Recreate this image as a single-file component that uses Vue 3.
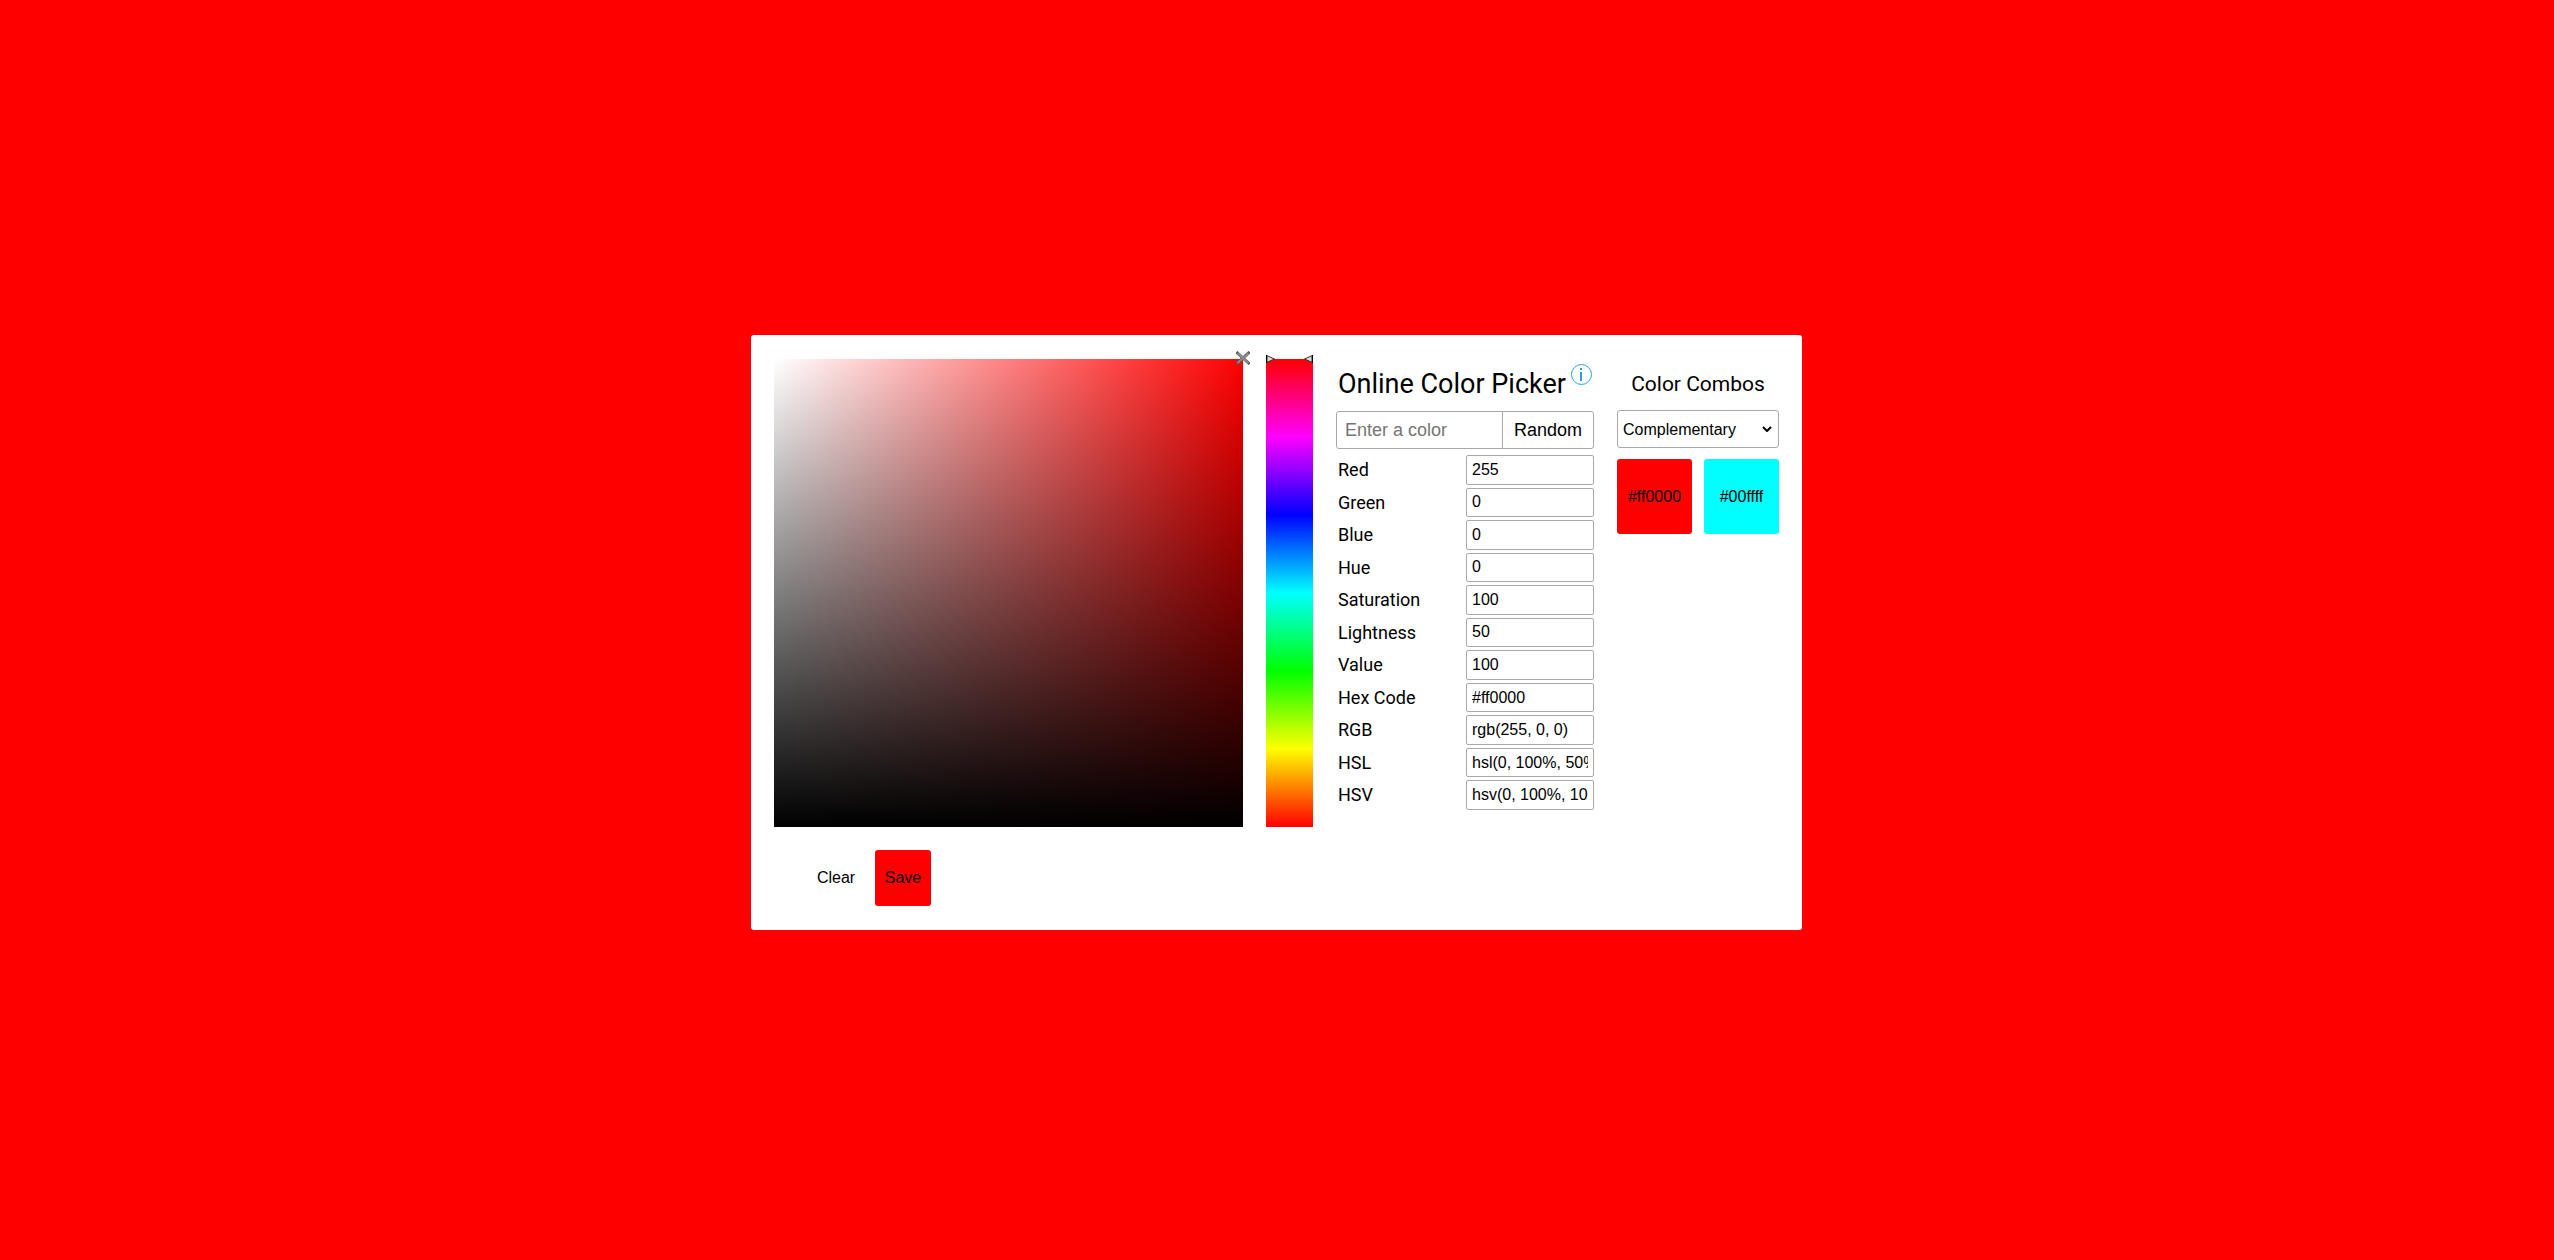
<script setup>
import { ref } from 'vue'

const fields = ref([
  { id: 'red', label: 'Red', value: '255' },
  { id: 'green', label: 'Green', value: '0' },
  { id: 'blue', label: 'Blue', value: '0' },
  { id: 'hue', label: 'Hue', value: '0' },
  { id: 'saturation', label: 'Saturation', value: '100' },
  { id: 'lightness', label: 'Lightness', value: '50' },
  { id: 'value', label: 'Value', value: '100' },
  { id: 'hex', label: 'Hex Code', value: '#ff0000' },
  { id: 'rgb', label: 'RGB', value: 'rgb(255, 0, 0)' },
  { id: 'hsl', label: 'HSL', value: 'hsl(0, 100%, 50%)' },
  { id: 'hsv', label: 'HSV', value: 'hsv(0, 100%, 100%)' },
])
const swatches = ['#ff0000', '#00ffff']
const entry = ref('')
</script>

<template>
  <main class="page">
    <section class="card">
      <div class="columns">
        <div class="shade">
          <svg class="cross" width="14" height="14" viewBox="0 0 14 14" aria-hidden="true">
            <path d="M1.500 2 12.500 12M12.500 2 1.500 12" stroke="#555" stroke-width="3" stroke-linecap="square" />
            <path d="M1.500 2 12.500 12M12.500 2 1.500 12" stroke="#8c8c8c" stroke-width="2" />
          </svg>
        </div>

        <div class="hue">
          <svg class="arrow arrow-left" width="10" height="8" viewBox="0 0 10 8" aria-hidden="true">
            <path d="M1 .7V7.300L8.500 4Z" fill="#ddd" stroke="#333" stroke-width="1" />
            <path d="M.5 0V8" stroke="#000" />
          </svg>
          <svg class="arrow arrow-right" width="10" height="8" viewBox="0 0 10 8" aria-hidden="true">
            <path d="M9 .7V7.300L1.500 4Z" fill="#ddd" stroke="#333" stroke-width="1" />
            <path d="M9.500 0V8" stroke="#000" />
          </svg>
        </div>

        <form class="details" @submit.prevent>
          <header class="heading">
            <h1>Online Color Picker</h1>
            <a class="info" href="#" aria-label="About">
              <svg width="21" height="21" viewBox="0 0 21 21" fill="none" stroke="#2a9fe0">
                <circle cx="10.500" cy="10.500" r="10" />
                <path d="M10 8V17" stroke-width="2" />
                <path d="M10 4V6" stroke-width="2" />
              </svg>
            </a>
          </header>
          <div class="entry">
            <input v-model="entry" type="text" placeholder="Enter a color" aria-label="Enter a color">
            <button type="button">Random</button>
          </div>
          <div class="fields">
            <div v-for="field in fields" :key="field.id" class="field">
              <label :for="field.id">{{ field.label }}</label>
              <input :id="field.id" v-model="field.value" type="text">
            </div>
          </div>
        </form>

        <aside class="combos">
          <h2><label for="combo">Color Combos</label></h2>
          <div class="select">
            <select id="combo">
              <option>Complementary</option>
            </select>
            <svg class="chevron" width="10" height="6" viewBox="0 0 10 6" aria-hidden="true">
              <path d="M1 1 5 5 9 1" fill="none" stroke="#000" stroke-width="2" />
            </svg>
          </div>
          <div class="swatches">
            <button v-for="color in swatches" :key="color" type="button" :style="{ background: color }">{{ color }}</button>
          </div>
        </aside>
      </div>

      <div class="actions">
        <button type="button">Clear</button>
        <button type="button" class="save">Save</button>
      </div>
    </section>
  </main>
</template>

<style>
body {
  margin: 0;
  background: #f00;
}
</style>

<style scoped>
* {
  box-sizing: border-box;
}
.page {
  min-height: 100vh;
  padding: 5px 1px 0 0;
  display: flex;
  align-items: center;
  justify-content: center;
  font-family: Roboto, sans-serif;
  color: #000;
}
input,
button,
select {
  font-family: "Liberation Sans", Arial, sans-serif;
  font-size: 16px;
  color: #000;
  margin: 0;
  border-radius: 3px;
}
input,
select {
  border: 1px solid #a9a9a9;
  background: #fff;
}
button {
  border: 0;
  padding: 0;
  background: transparent;
}
.card {
  background: #fff;
  border-radius: 3px;
  padding: 24px 23px;
}
.columns {
  display: flex;
  gap: 23px;
}
.shade {
  position: relative;
  width: 469px;
  height: 468px;
  background:
    linear-gradient(to top, #000, transparent),
    linear-gradient(to right, #fff, #f00);
}
.cross {
  position: absolute;
  top: -8px;
  right: -7px;
}
.hue {
  position: relative;
  width: 47px;
  background: linear-gradient(#f00, #f0f, #00f, #0ff, #0f0, #ff0, #f00);
}
.arrow {
  position: absolute;
  top: -4px;
}
.arrow-left {
  left: 0;
}
.arrow-right {
  right: 0;
}
.details {
  width: 258px;
}
.heading {
  display: flex;
  justify-content: space-between;
  height: 52px;
  padding: 5px 2px 0;
}
h1 {
  margin: 0;
  font-size: 27px;
  line-height: 40px;
  font-weight: 400;
  white-space: nowrap;
}
.info {
  display: block;
  height: 21px;
}
.info svg {
  display: block;
}
.entry {
  display: flex;
  height: 38px;
  margin-bottom: 6px;
  border: 1px solid #a9a9a9;
  border-radius: 3px;
}
.entry input {
  flex: 1;
  min-width: 0;
  border: 0;
  padding: 0 8px;
  font-size: 18px;
}
.entry input::placeholder {
  color: #757575;
}
.entry button {
  width: 91px;
  border-left: 1px solid #a9a9a9;
  border-radius: 0;
  font-size: 18px;
}
.fields {
  display: grid;
  grid-auto-rows: 1fr;
  gap: 3px;
  height: 355px;
}
.field {
  display: flex;
  justify-content: space-between;
  align-items: stretch;
  min-height: 0;
}
.field label {
  padding-left: 2px;
  font-size: 18px;
  line-height: 30px;
}
.field input {
  width: 128px;
  padding: 0 5px;
  border-radius: 2px;
}
.combos {
  width: 162px;
}
h2 {
  margin: 0;
  height: 51px;
  padding-top: 5px;
  font-size: 21px;
  line-height: 40px;
  font-weight: 400;
  text-align: center;
}
.select {
  position: relative;
}
select {
  display: block;
  appearance: none;
  width: 100%;
  height: 38px;
  padding: 0 5px;
}
.chevron {
  position: absolute;
  right: 7px;
  top: 16px;
}
.swatches {
  display: flex;
  gap: 12px;
  margin-top: 11px;
}
.swatches button {
  width: 75px;
  height: 75px;
}
.actions {
  display: flex;
  gap: 11px;
  margin-top: 23px;
  padding-left: 34px;
}
.actions button {
  width: 56px;
  height: 56px;
}
.actions .save {
  background: #f00;
}
</style>
